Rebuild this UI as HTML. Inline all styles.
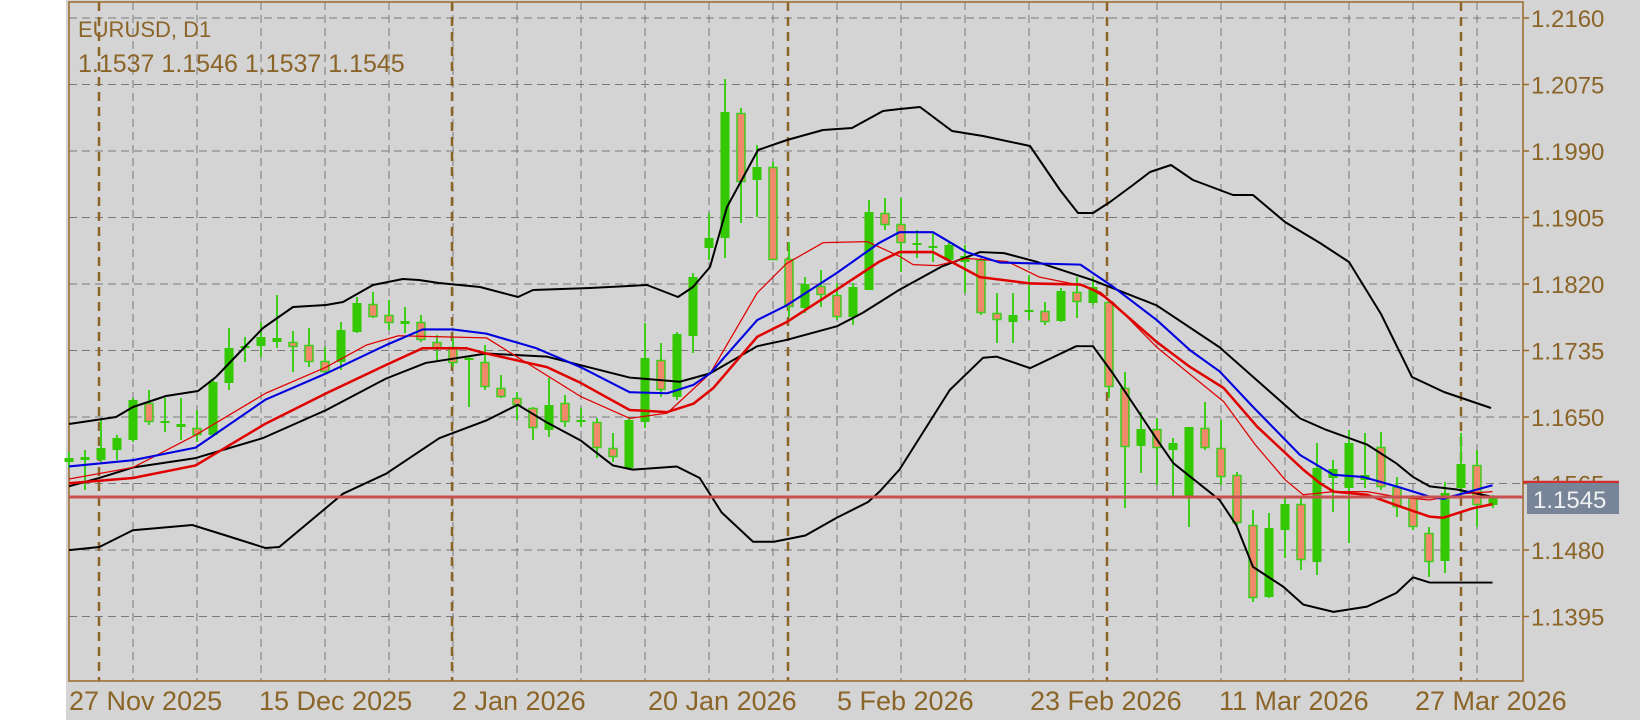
<!DOCTYPE html>
<html><head><meta charset="utf-8"><style>
html,body{margin:0;padding:0;background:#fff;}
svg{display:block;}
text{font-family:"Liberation Sans",sans-serif;fill:#8b6428;}
</style></head><body>
<svg id="s" width="1640" height="720" viewBox="0 0 1640 720" xmlns="http://www.w3.org/2000/svg">
<rect x="0" y="0" width="1640" height="720" fill="#fff"/>
<rect x="66" y="0" width="1574" height="720" fill="#d4d4d4"/>
<g id="grid" stroke="#7a7a7a" stroke-width="1" stroke-dasharray="8,5" fill="none"></g>
<g id="sep" stroke="#8b6428" stroke-width="2.5" stroke-dasharray="9,6" fill="none">
<line x1="99" y1="2" x2="99" y2="681"/><line x1="452" y1="2" x2="452" y2="681"/>
<line x1="788" y1="2" x2="788" y2="681"/><line x1="1107" y1="2" x2="1107" y2="681"/>
<line x1="1461" y1="2" x2="1461" y2="681"/>
</g>
<rect x="69" y="2" width="1454" height="679" fill="none" stroke="#9a6a2a" stroke-width="1.5"/>
<g id="ticks" stroke="#9a6a2a" stroke-width="1.5"></g>
<g id="candles"></g>
<g fill="none" stroke-linejoin="round">
<polyline stroke="#000" stroke-width="2" points="69,424 116,417 133,407 166,396 198,391 216,377 263,328 293,307 326,305 343,302 373,285 403,279 419,280 439,283 480,287 518,297 533,290 590,288 647,285 678,297 693,287 710,267 727,207 758,150 787,140 823,130 852,128 883,111 900,109 920,107 952,131 983,136 1030,146 1060,190 1078,213 1093,213 1110,202 1133,185 1150,172 1171,165 1193,180 1233,195 1253,195 1285,222 1320,243 1349,262 1381,314 1412,377 1444,392 1491,408"/>
<g transform="scale(1.0459)">
<polyline stroke="#000" stroke-width="1.9" points="66,465 95,457 127,447 187,438 251,419 312,392 369,362 407,347 465,338 523,341 602,361 650,365 679,357 724,331 752,325 800,312 825,299 860,277 900,255 937,241 960,242 990,250 1045,268 1106,292 1166,332 1243,400 1268,411 1307,425 1335,443 1351,456 1367,465 1393,468 1427,475"/>
<polyline stroke="#000" stroke-width="1.9" points="66,526 95,523 127,507 184,502 216,512 254,524 267,523 328,472 369,453 420,419 465,402 495,387 523,404 555,421 586,445 605,449 647,446 669,457 690,490 720,518 740,518 770,512 800,495 830,480 841,470 860,449 908,373 940,342 953,341 985,352 1029,331 1045,331 1064,357 1106,420 1122,443 1166,478 1182,502 1198,542 1227,561 1246,578 1275,585 1307,580 1335,567 1351,552 1367,557 1427,557"/>
<polyline stroke="#e00000" stroke-width="1.2" points="66,458 127,447 187,416 254,376 312,351 350,330 381,321 465,323 523,359 555,379 602,400 638,395 679,357 724,280 752,252 787,232 829,231 860,245 873,253 896,254 924,247 963,250 994,265 1039,274 1064,289 1106,332 1170,384 1200,425 1229,459 1246,473 1275,470 1307,470 1335,475 1367,478 1400,472 1427,470"/>
<polyline stroke="#e00000" stroke-width="2.4" points="66,462 127,457 187,445 254,405 312,376 369,349 404,333 446,333 465,338 523,351 555,366 602,392 638,394 663,386 682,371 724,322 752,308 800,277 841,250 860,241 892,241 937,265 985,271 1033,272 1052,280 1106,327 1138,351 1170,371 1202,408 1246,449 1262,462 1275,470 1307,473 1335,483 1367,494 1380,495 1408,486 1427,482"/>
<polyline stroke="#0000e0" stroke-width="2" points="66,446 127,440 187,428 254,382 312,357 369,330 404,315 433,315 465,319 513,333 555,351 602,375 638,376 663,368 679,357 724,306 752,292 800,261 841,232 860,222 892,222 924,241 956,251 1033,253 1064,274 1106,306 1138,335 1166,355 1198,389 1243,435 1275,454 1303,456 1335,465 1367,475 1380,477 1427,464"/>
</g>
</g>
<line x1="69" y1="497" x2="1523" y2="497" stroke="#c85050" stroke-width="3"/>
<g id="plabels" font-size="24"></g>
<line x1="1523" y1="482" x2="1619" y2="482" stroke="#d03030" stroke-width="2.5"/>
<rect x="1527" y="483" width="92" height="31" fill="#788497"/>
<text x="1533" y="508" font-size="24" style="fill:#eef0f2">1.1545</text>
<text x="78" y="37" font-size="22">EURUSD, D1</text>
<text x="78" y="72" font-size="25">1.1537 1.1546 1.1537 1.1545</text>
<g font-size="27">
<text x="69" y="710">27 Nov 2025</text><text x="259" y="710">15 Dec 2025</text>
<text x="452" y="710">2 Jan 2026</text><text x="648" y="710">20 Jan 2026</text>
<text x="837" y="710">5 Feb 2026</text><text x="1030" y="710">23 Feb 2026</text>
<text x="1219" y="710">11 Mar 2026</text><text x="1415" y="710">27 Mar 2026</text>
</g>
</svg>
<script>
var NS="http://www.w3.org/2000/svg";
function el(p,t,a){var e=document.createElementNS(NS,t);for(var k in a)e.setAttribute(k,a[k]);p.appendChild(e);return e;}
var g=document.getElementById("grid");
for(var k=0;k<10;k++){var y=18+66.5*k;el(g,"line",{x1:69,y1:y,x2:1523,y2:y});}
for(var k=0;k<22;k++){var x=133+64*k;el(g,"line",{x1:x,y1:2,x2:x,y2:681});}
var pl=document.getElementById("plabels"),tk=document.getElementById("ticks");
var labs=["1.2160","1.2075","1.1990","1.1905","1.1820","1.1735","1.1650","1.1565","1.1480","1.1395"];
for(var k=0;k<labs.length;k++){var y=18+66.5*k;el(tk,"line",{x1:1523,y1:y,x2:1529,y2:y});
var t=el(pl,"text",{x:1531,y:y+9});t.textContent=labs[k];}
var D=[["g",458,462,452,468],["g",457,460,450,490],["g",448,460,420,462],["g",438,450,435,460],["g",400,440,398,442],["r",403,422,390,425],["g",421,423,398,432],["g",424,427,398,440],["r",428,435,410,442],["g",382,435,380,437],["g",348,383,328,390],["g",346,348,337,362],["g",337,346,322,357],["g",338,342,295,348],["r",342,347,331,372],["r",345,362,328,367],["r",361,372,347,373],["g",330,362,322,370],["g",303,332,297,333],["r",304,317,292,318],["r",315,323,300,330],["g",321,324,307,333],["r",322,340,315,342],["r",342,348,335,360],["r",347,363,337,367],["g",358,360,357,407],["r",362,387,345,390],["r",388,397,375,398],["r",398,405,392,420],["r",408,428,407,440],["g",405,430,378,437],["r",403,422,395,427],["g",420,422,408,427],["r",422,448,418,458],["r",448,457,433,462],["g",420,468,418,470],["g",358,422,323,428],["r",360,390,343,397],["g",334,397,332,400],["g",277,336,273,353],["g",238,248,213,260],["g",112,238,79,258],["r",113,182,108,223],["g",167,180,145,217],["r",167,260,162,260],["r",259,307,242,317],["g",284,308,277,313],["r",286,295,270,307],["r",295,317,283,320],["g",287,317,283,325],["g",212,290,200,290],["r",213,225,198,230],["r",224,243,198,272],["g",243,245,230,258],["g",246,248,233,262],["g",245,260,242,262],["g",256,262,245,293],["r",260,313,258,315],["r",313,320,293,343],["g",315,322,293,343],["g",310,312,275,320],["r",311,322,302,325],["g",291,321,288,322],["r",292,302,277,318],["g",287,303,277,305],["r",302,387,300,398],["r",388,447,372,508],["g",429,446,412,473],["r",429,448,418,485],["g",443,450,438,497],["g",427,497,427,527],["r",428,448,402,450],["r",448,477,420,485],["r",475,523,472,525],["r",525,598,510,602],["g",528,597,513,598],["g",504,530,497,558],["r",504,560,497,570],["g",468,562,443,575],["g",469,478,460,512],["g",443,488,430,543],["g",475,480,433,488],["r",447,487,432,490],["r",487,507,477,517],["r",497,527,495,530],["r",533,562,527,577],["g",493,561,482,573],["g",464,488,433,497],["r",465,505,450,527],["g",498,505,495,508]];
var c=document.getElementById("candles");
for(var i=0;i<D.length;i++){var d=D[i],x=69+16*i;
el(c,"line",{x1:x,y1:d[3],x2:x,y2:d[4],stroke:"#3ccf1c","stroke-width":2});
var h=Math.max(d[2]-d[1],2);
if(d[0]=="g")el(c,"rect",{x:x-4.5,y:d[1],width:9,height:h,fill:"#33c800"});
else el(c,"rect",{x:x-4,y:d[1]+0.5,width:8,height:Math.max(h-1,1),fill:"#ee8a6a",stroke:"#3ccf1c","stroke-width":1.5});}
</script>
</body></html>
